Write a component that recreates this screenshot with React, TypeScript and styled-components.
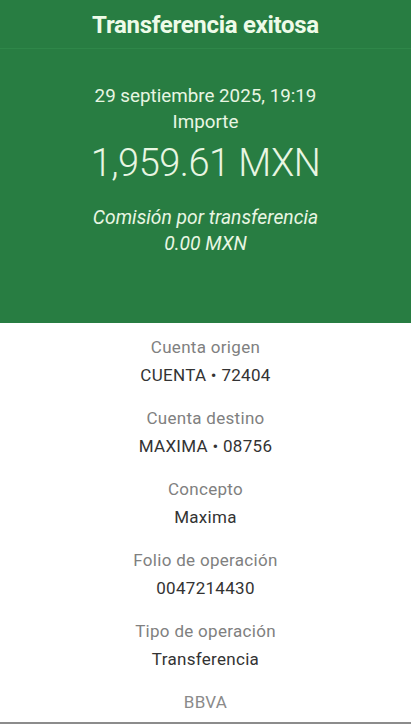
import styled, { createGlobalStyle } from 'styled-components';

const GlobalStyle = createGlobalStyle`
  html, body {
    margin: 0;
    padding: 0;
    background: #ffffff;
  }
  body {
    font-family: Roboto, 'Noto Sans', sans-serif;
  }
`;

const details = [
  { label: 'Cuenta origen', value: 'CUENTA • 72404' },
  { label: 'Cuenta destino', value: 'MAXIMA • 08756' },
  { label: 'Concepto', value: 'Maxima' },
  { label: 'Folio de operación', value: '0047214430' },
  { label: 'Tipo de operación', value: 'Transferencia' },
];

export default function App() {
  return (
    <Page>
      <GlobalStyle />
      <Hero>
        <TopBar>
          <Title>Transferencia exitosa</Title>
        </TopBar>
        <Summary>
          <Line>29 septiembre 2025, 19:19</Line>
          <Line>Importe</Line>
          <Amount>1,959.61 MXN</Amount>
          <Fee>
            <Line italic>Comisión por transferencia</Line>
            <Line italic>0.00 MXN</Line>
          </Fee>
        </Summary>
      </Hero>
      <Details>
        {details.map((d) => (
          <Item key={d.label}>
            <Label>{d.label}</Label>
            <Value>{d.value}</Value>
          </Item>
        ))}
        <Bank>BBVA</Bank>
      </Details>
      <BottomRule />
    </Page>
  );
}

const Page = styled('div')`
  width: 411px;
  height: 724px;
  display: flex;
  flex-direction: column;
  overflow: hidden;
  background: #fff;
`;

const Hero = styled('section')`
  background: #287d42;
  color: #e8f6e2;
  height: 323px;
  display: flex;
  flex-direction: column;
`;

const TopBar = styled('header')`
  height: 48px;
  display: flex;
  align-items: center;
  justify-content: center;
  border-bottom: 1px solid #2f8749;
`;

const Title = styled('h1')`
  margin: 0;
  padding-top: 2px;
  font-size: 24px;
  font-weight: 700;
  letter-spacing: -0.3px;
  color: #eefbe8;
`;

const Summary = styled('div')`
  padding-top: 34px;
  display: flex;
  flex-direction: column;
  align-items: center;
  text-align: center;
`;

const Line = styled('div')<{ italic?: boolean }>`
  font-size: ${(p) => (p.italic ? '19.3px' : '18.8px')};
  line-height: 26px;
  font-weight: 400;
  font-style: ${(p) => (p.italic ? 'italic' : 'normal')};
`;

const Amount = styled('div')`
  margin-top: 4px;
  font-size: 38px;
  line-height: 48px;
  font-weight: 300;
  letter-spacing: -0.5px;
`;

const Fee = styled('div')`
  margin-top: 18px;
  display: flex;
  flex-direction: column;
  align-items: center;
`;

const Details = styled('section')`
  flex: 1;
  padding-top: 10px;
  display: flex;
  flex-direction: column;
  align-items: center;
  gap: 15px;
  text-align: center;
`;

const Item = styled('div')`
  display: flex;
  flex-direction: column;
  align-items: center;
`;

const Label = styled('div')`
  font-size: 17px;
  line-height: 28px;
  color: #808080;
  letter-spacing: 0.3px;
`;

const Value = styled('div')`
  font-size: 17px;
  line-height: 28px;
  color: #333333;
  letter-spacing: 0.3px;
`;

const Bank = styled('div')`
  font-size: 17px;
  line-height: 28px;
  color: #8a8a8a;
  letter-spacing: 0.3px;
`;

const BottomRule = styled('div')`
  height: 2px;
  background: #8c8c8c;
`;
